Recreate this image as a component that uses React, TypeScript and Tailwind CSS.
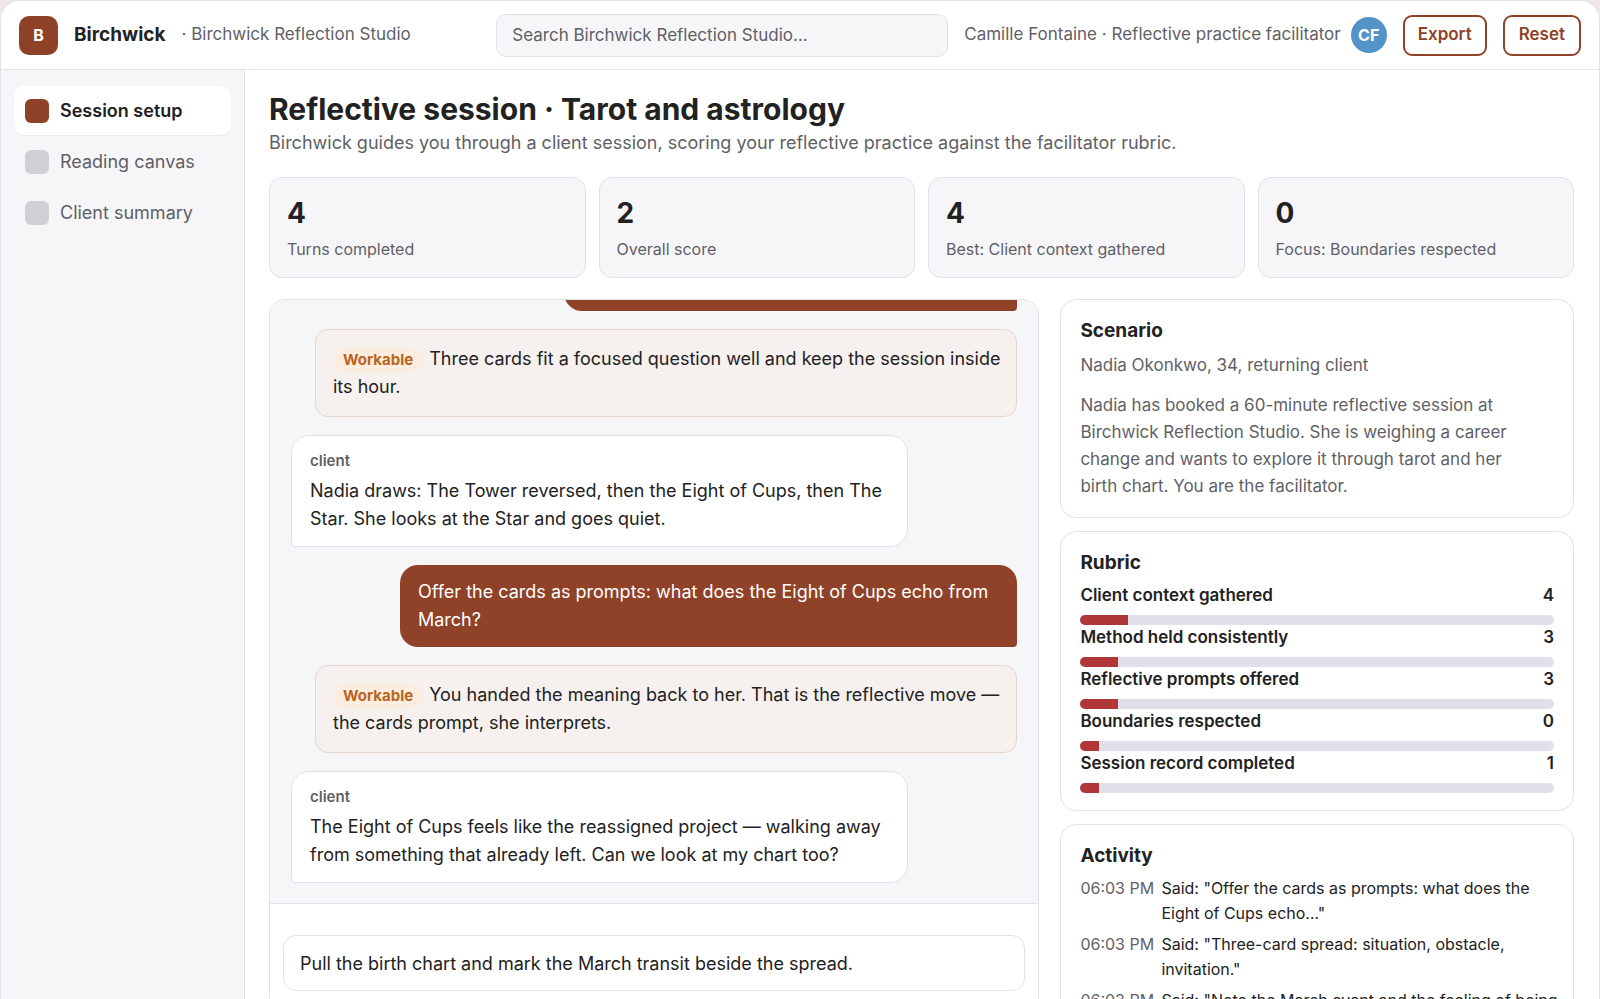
import { useState } from 'react';

const navItems = ['Session setup', 'Reading canvas', 'Client summary'];

const stats = [
  { value: 4, label: 'Turns completed' },
  { value: 2, label: 'Overall score' },
  { value: 4, label: 'Best: Client context gathered' },
  { value: 0, label: 'Focus: Boundaries respected' },
];

const messages = [
  { kind: 'user', text: 'Three-card spread: situation, obstacle, invitation.' },
  { kind: 'feedback', text: 'Three cards fit a focused question well and keep the session inside its hour.' },
  {
    kind: 'client',
    text: 'Nadia draws: The Tower reversed, then the Eight of Cups, then The Star. She looks at the Star and goes quiet.',
  },
  { kind: 'user', text: 'Offer the cards as prompts: what does the Eight of Cups echo from March?' },
  {
    kind: 'feedback',
    text: 'You handed the meaning back to her. That is the reflective move — the cards prompt, she interprets.',
  },
  {
    kind: 'client',
    text: 'The Eight of Cups feels like the reassigned project — walking away from something that already left. Can we look at my chart too?',
  },
];

const rubric = [
  { label: 'Client context gathered', score: 4, percent: 10 },
  { label: 'Method held consistently', score: 3, percent: 8 },
  { label: 'Reflective prompts offered', score: 3, percent: 8 },
  { label: 'Boundaries respected', score: 0, percent: 4 },
  { label: 'Session record completed', score: 1, percent: 4 },
];

const activity = [
  { time: '06:03 PM', text: 'Said: "Offer the cards as prompts: what does the Eight of Cups echo…"' },
  { time: '06:03 PM', text: 'Said: "Three-card spread: situation, obstacle, invitation."' },
  { time: '06:03 PM', text: 'Said: "Note the March event and the feeling of being passed over…"' },
];

function Header() {
  return (
    <header className="flex h-[69px] shrink-0 items-center border-b border-[#e4e3ea] bg-white px-[18px]">
      <div className="flex size-[39px] shrink-0 items-center justify-center rounded-[10px] bg-[#8f4228] text-base font-bold text-white">
        B
      </div>
      <span className="ml-4 text-[19px] font-bold">Birchwick</span>
      <span className="ml-4 whitespace-nowrap text-[17px] text-[#5f5f66]">· Birchwick Reflection Studio</span>
      <div className="flex flex-1 items-center justify-end whitespace-nowrap">
        <input
          type="search"
          aria-label="Search"
          placeholder="Search Birchwick Reflection Studio…"
          className="h-[43px] w-[452px] rounded-[10px] border border-[#e2e1ea] bg-[#f6f6f9] px-[15px] text-[17px] outline-none placeholder:text-[#5f5f66]"
        />
        <span className="ml-4 text-[17px] text-[#5f5f66]">Camille Fontaine · Reflective practice facilitator</span>
        <span className="ml-[10px] flex size-9 items-center justify-center rounded-full bg-[#5493c7] text-base font-bold text-white">
          CF
        </span>
        <button
          type="button"
          className="ml-4 h-[41px] rounded-[9px] border-2 border-[#8f4228] px-[13px] text-[17px] font-semibold text-[#8f4228]"
        >
          Export
        </button>
        <button
          type="button"
          className="ml-4 h-[41px] rounded-[9px] border-2 border-[#8f4228] px-[14px] text-[17px] font-semibold text-[#8f4228]"
        >
          Reset
        </button>
      </div>
    </header>
  );
}

function Sidebar() {
  const [active, setActive] = useState('Session setup');

  return (
    <nav className="flex w-[244px] shrink-0 flex-col gap-[2px] border-r border-[#e2e1ea] bg-[#f6f6f9] px-[13px] py-4">
      {navItems.map((item) => (
        <button
          key={item}
          type="button"
          onClick={() => setActive(item)}
          className={`flex h-[49px] items-center gap-[11px] rounded-[10px] px-[11px] text-left text-lg ${
            item === active ? 'bg-white font-semibold shadow-xs' : 'text-[#5f5f66]'
          }`}
        >
          <span className={`size-6 rounded-md ${item === active ? 'bg-[#8f4228]' : 'bg-[#d0cfd4]'}`} />
          {item}
        </button>
      ))}
    </nav>
  );
}

function Message({ kind, text }: { kind: string; text: string }) {
  if (kind === 'feedback') {
    return (
      <div className="ml-6 rounded-[13px] border border-[#e6d5cf] bg-[#f6f1ef] py-[15px] pl-[17px] pr-3">
        <span className="mr-[6px] inline-block rounded-full bg-[#fbeee1] px-[10px] text-[15px] font-bold leading-[26px] text-[#b9651b]">
          Workable
        </span>
        {text}
      </div>
    );
  }

  if (kind === 'user') {
    return (
      <div className="max-w-[85%] self-end rounded-[18px] rounded-br-[4px] bg-[#8f4228] px-[18px] py-[13px] text-white">
        {text}
      </div>
    );
  }

  return (
    <div className="max-w-[85%] self-start rounded-[18px] rounded-bl-[4px] border border-[#e2e1ea] bg-white px-[18px] py-[13px]">
      <div className="mb-1 text-[15px] font-semibold leading-6 text-[#5f5f66]">client</div>
      {text}
    </div>
  );
}

function Chat() {
  const [draft, setDraft] = useState('Pull the birth chart and mark the March transit beside the spread.');

  return (
    <section className="overflow-hidden rounded-2xl border border-[#e2e1ea]">
      <div className="flex h-[604px] flex-col justify-end gap-[18px] overflow-hidden border-b border-[#e2e1ea] bg-[#f6f6f9] px-[21px] py-5 text-lg leading-7">
        {messages.map((m) => (
          <Message key={m.text} kind={m.kind} text={m.text} />
        ))}
      </div>
      <div className="bg-white px-[13px] pb-5 pt-[31px]">
        <input
          type="text"
          aria-label="Your reply"
          value={draft}
          onChange={(e) => setDraft(e.target.value)}
          className="h-14 w-full rounded-[13px] border border-[#e2e1ea] bg-white px-4 text-lg outline-none"
        />
      </div>
    </section>
  );
}

function Card({ title, children }: { title: string; children: React.ReactNode }) {
  return (
    <section className="rounded-2xl border border-[#e2e1ea] bg-white px-[19px] py-[17px]">
      <h2 className="mb-[6px] text-[19px] font-bold leading-7">{title}</h2>
      {children}
    </section>
  );
}

function SidePanel() {
  return (
    <div className="flex flex-col gap-[13px]">
      <Card title="Scenario">
        <div className="pr-4 text-[17px] leading-[27px] text-[#5f5f66]">
          <p className="mt-[7px]">Nadia Okonkwo, 34, returning client</p>
          <p className="mt-[13px]">
            Nadia has booked a 60-minute reflective session at Birchwick Reflection Studio. She is weighing a career change
            and wants to explore it through tarot and her birth chart. You are the facilitator.
          </p>
        </div>
      </Card>

      <Card title="Rubric">
        {rubric.map((row) => (
          <div key={row.label} className="h-[42px]">
            <div className="flex justify-between text-[17px] font-semibold leading-6">
              <span>{row.label}</span>
              <span>{row.score}</span>
            </div>
            <div className="mt-2 h-[10px] overflow-hidden rounded-full bg-[#e1dfe9]">
              <div className="h-full bg-[#b03638]" style={{ width: `${row.percent}%` }} />
            </div>
          </div>
        ))}
      </Card>

      <Card title="Activity">
        <ul className="-mr-2 flex flex-col gap-[6px] text-base leading-[25px]">
          {activity.map((entry) => (
            <li key={entry.text} className="flex gap-[10px]">
              <span className="w-[71px] shrink-0 whitespace-nowrap text-[#5f5f66]">{entry.time}</span>
              <span>{entry.text}</span>
            </li>
          ))}
        </ul>
      </Card>
    </div>
  );
}

export default function App() {
  return (
    <div className="h-screen overflow-hidden bg-[#efe6e6] font-['Inter',sans-serif] text-[#222222]">
      <div className="flex h-full flex-col overflow-hidden rounded-t-[20px] border border-b-0 border-[#e2e1ea] bg-white">
        <Header />
        <div className="flex min-h-0 flex-1">
          <Sidebar />
          <main className="min-w-0 flex-1 overflow-hidden pl-6 pr-[25px] pt-[19px]">
            <h1 className="text-3xl font-bold leading-10">Reflective session · Tarot and astrology</h1>
            <p className="mt-[2px] text-lg leading-6 text-[#5f5f66]">
              Birchwick guides you through a client session, scoring your reflective practice against the facilitator rubric.
            </p>

            <div className="mt-[22px] grid grid-cols-4 gap-[13px]">
              {stats.map((stat) => (
                <div key={stat.label} className="h-[101px] rounded-[13px] border border-[#e2e1ea] bg-[#f6f6f9] px-[17px] pt-[17px]">
                  <div className="text-[28px] font-bold leading-9">{stat.value}</div>
                  <div className="mt-[6px] text-base leading-6 text-[#5f5f66]">{stat.label}</div>
                </div>
              ))}
            </div>

            <div className="mt-[21px] grid grid-cols-[3fr_2fr] items-start gap-[21px]">
              <Chat />
              <SidePanel />
            </div>
          </main>
        </div>
      </div>
    </div>
  );
}
